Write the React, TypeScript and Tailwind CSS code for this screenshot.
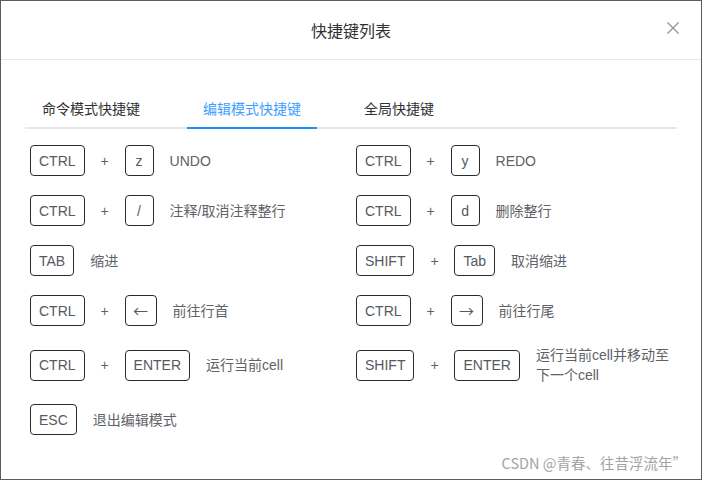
import React from "react";

type Item = { keys: string[]; desc: string };

const rows: [Item, Item | null][] = [
  [{ keys: ["CTRL", "z"], desc: "UNDO" }, { keys: ["CTRL", "y"], desc: "REDO" }],
  [{ keys: ["CTRL", "/"], desc: "注释/取消注释整行" }, { keys: ["CTRL", "d"], desc: "删除整行" }],
  [{ keys: ["TAB"], desc: "缩进" }, { keys: ["SHIFT", "Tab"], desc: "取消缩进" }],
  [{ keys: ["CTRL", "←"], desc: "前往行首" }, { keys: ["CTRL", "→"], desc: "前往行尾" }],
  [{ keys: ["CTRL", "ENTER"], desc: "运行当前cell" }, { keys: ["SHIFT", "ENTER"], desc: "运行当前cell并移动至下一个cell" }],
  [{ keys: ["ESC"], desc: "退出编辑模式" }, null],
];

function Key({ k }: { k: string }) {
  const arrow = k === "←" || k === "→";
  return (
    <span
      className={
        arrow
          ? "inline-flex h-[31px] w-[32px] shrink-0 items-center justify-center rounded-[4px] border border-[#2b2b2b] text-[15px] leading-4 text-[#555a61]"
          : "inline-flex h-[31px] min-w-[29px] shrink-0 items-center justify-center rounded-[4px] border border-[#2b2b2b] px-[8px] text-[14px] leading-4 text-[#555a61]"
      }
      style={arrow ? { fontFamily: '"Noto Sans CJK SC", sans-serif' } : undefined}
    >
      {k}
    </span>
  );
}

function Cell({ item }: { item: Item | null }) {
  if (!item) return <div />;
  return (
    <div className="flex items-center pl-[5px]">
      {item.keys.map((k, i) => (
        <React.Fragment key={i}>
          {i > 0 && <span className="mx-4 w-[8px] text-center text-[14px] leading-4 text-[#606266]">+</span>}
          <Key k={k} />
        </React.Fragment>
      ))}
      <span className="ml-4 min-w-0 text-[14px] leading-5 text-[#606266]">{item.desc}</span>
    </div>
  );
}

export default function App() {
  const font = { fontFamily: '"Liberation Sans", Arial, "Noto Sans CJK SC", sans-serif' };
  return (
    <div className="relative h-[480px] w-[702px] overflow-hidden border border-[#5c5c5c] bg-white" style={font}>
      <div className="relative flex h-[59px] items-center justify-center border-b border-[#e4e7ed]">
        <span className="pt-[3px] text-[16px] leading-6 text-[#303133]">快捷键列表</span>
        <svg className="absolute right-[22px] top-[21px]" width="12" height="12" viewBox="0 0 12 12">
          <path d="M0.5 0.5 L11.5 11.5 M11.5 0.5 L0.5 11.5" stroke="#909399" strokeWidth="1.3" fill="none" />
        </svg>
      </div>
      <div className="px-[24px] pt-[28px]">
        <div className="relative flex h-[41px] gap-[31px] border-b-2 border-[#e4e7ed] pl-px">
          <div className="flex h-[39px] items-center px-4 pt-[3px] text-[14px] text-[#303133]">命令模式快捷键</div>
          <div className="relative flex h-[39px] items-center px-4 pt-[3px] text-[14px] text-[#409eff]">
            编辑模式快捷键
            <span className="absolute bottom-[-2px] left-0 right-0 h-[2px] bg-[#1890ff]" />
          </div>
          <div className="flex h-[39px] items-center px-4 pt-[3px] text-[14px] text-[#303133]">全局快捷键</div>
        </div>
        <div className="mt-[16px] grid grid-cols-2 gap-y-[19px]">
          {rows.map(([a, b], i) => (
            <React.Fragment key={i}>
              <Cell item={a} />
              <Cell item={b} />
            </React.Fragment>
          ))}
        </div>
      </div>
      <div
        className="absolute bottom-[6px] right-[14px] text-[14.5px] leading-5 text-[#a3a3a3]"
        style={{ fontFamily: '"Noto Sans CJK SC", sans-serif' }}
      >
        CSDN @青春、往昔浮流年”
      </div>
    </div>
  );
}
